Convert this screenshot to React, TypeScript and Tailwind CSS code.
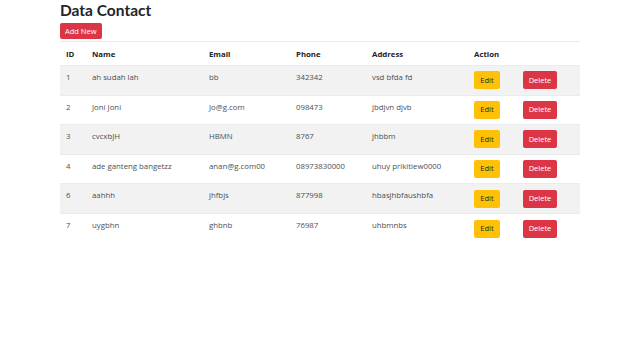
import React from 'react';

interface Contact {
  id: number;
  name: string;
  email: string;
  phone: string;
  address: string;
}

const contacts: Contact[] = [
  { id: 1, name: 'ah sudah lah', email: 'bb', phone: '342342', address: 'vsd bfda fd' },
  { id: 2, name: 'Joni Joni', email: 'Jo@g.com', phone: '098473', address: 'jbdjvn djvb' },
  { id: 3, name: 'cvcxbJH', email: 'HBMN', phone: '8767', address: 'jhbbm' },
  { id: 4, name: 'ade ganteng bangetzz', email: 'anan@g.com00', phone: '08973830000', address: 'uhuy prikitiew0000' },
  { id: 6, name: 'aahhh', email: 'jhfbjs', phone: '877998', address: 'hbasjhbfaushbfa' },
  { id: 7, name: 'uygbhn', email: 'ghbnb', phone: '76987', address: 'uhbmnbs' },
];

const th = 'px-[6px] py-0 text-left align-middle font-bold leading-[12px]';
const td = 'px-[6px] pt-[5px] pb-0 align-top leading-[12px]';
const tdBtn = 'px-[6px] py-0 align-middle';

export default function App() {
  return (
    <div className="h-[360px] w-[640px] bg-white font-['Open_Sans',sans-serif] text-[#212529]">
      <div className="mx-auto flex w-[520px] flex-col items-start">
        <h1 className="h-[20px] font-['Lato',sans-serif] text-[15.5px] font-bold leading-[21px] text-[#212529]">
          Data Contact
        </h1>
        <button className="mt-[3px] block h-[16px] rounded-[2px] bg-[#dc3545] px-[5px] text-[7.5px] leading-[16px] text-white">
          Add New
        </button>
        <table className="mt-[2px] w-full table-fixed border-collapse text-[7.8px]">
          <colgroup>
            <col className="w-[26px]" />
            <col className="w-[117px]" />
            <col className="w-[87px]" />
            <col className="w-[76px]" />
            <col className="w-[102px]" />
            <col className="w-[49px]" />
            <col className="w-[63px]" />
          </colgroup>
          <thead>
            <tr className="h-[24px] border-t border-[#e9ecef]">
              <th className={th}>ID</th>
              <th className={th}>Name</th>
              <th className={th}>Email</th>
              <th className={th}>Phone</th>
              <th className={th}>Address</th>
              <th className={th}>Action</th>
              <th className={th}></th>
            </tr>
          </thead>
          <tbody className="text-[#4b4f54]">
            {contacts.map((c, i) => (
              <tr
                key={c.id}
                className={`h-[29.6px] border-t border-[#e9ecef] ${i % 2 === 0 ? 'bg-[#f2f2f2]' : 'bg-white'}`}
              >
                <td className={td}>{c.id}</td>
                <td className={td}>{c.name}</td>
                <td className={td}>{c.email}</td>
                <td className={td}>{c.phone}</td>
                <td className={td}>{c.address}</td>
                <td className={tdBtn}>
                  <button className="block h-[18px] w-[26px] rounded-[2px] bg-[#ffc107] text-[7.5px] text-[#212529]">
                    Edit
                  </button>
                </td>
                <td className={tdBtn}>
                  <button className="block h-[18px] w-[34px] rounded-[2px] bg-[#dc3545] text-[7.5px] text-white">
                    Delete
                  </button>
                </td>
              </tr>
            ))}
          </tbody>
        </table>
      </div>
    </div>
  );
}
